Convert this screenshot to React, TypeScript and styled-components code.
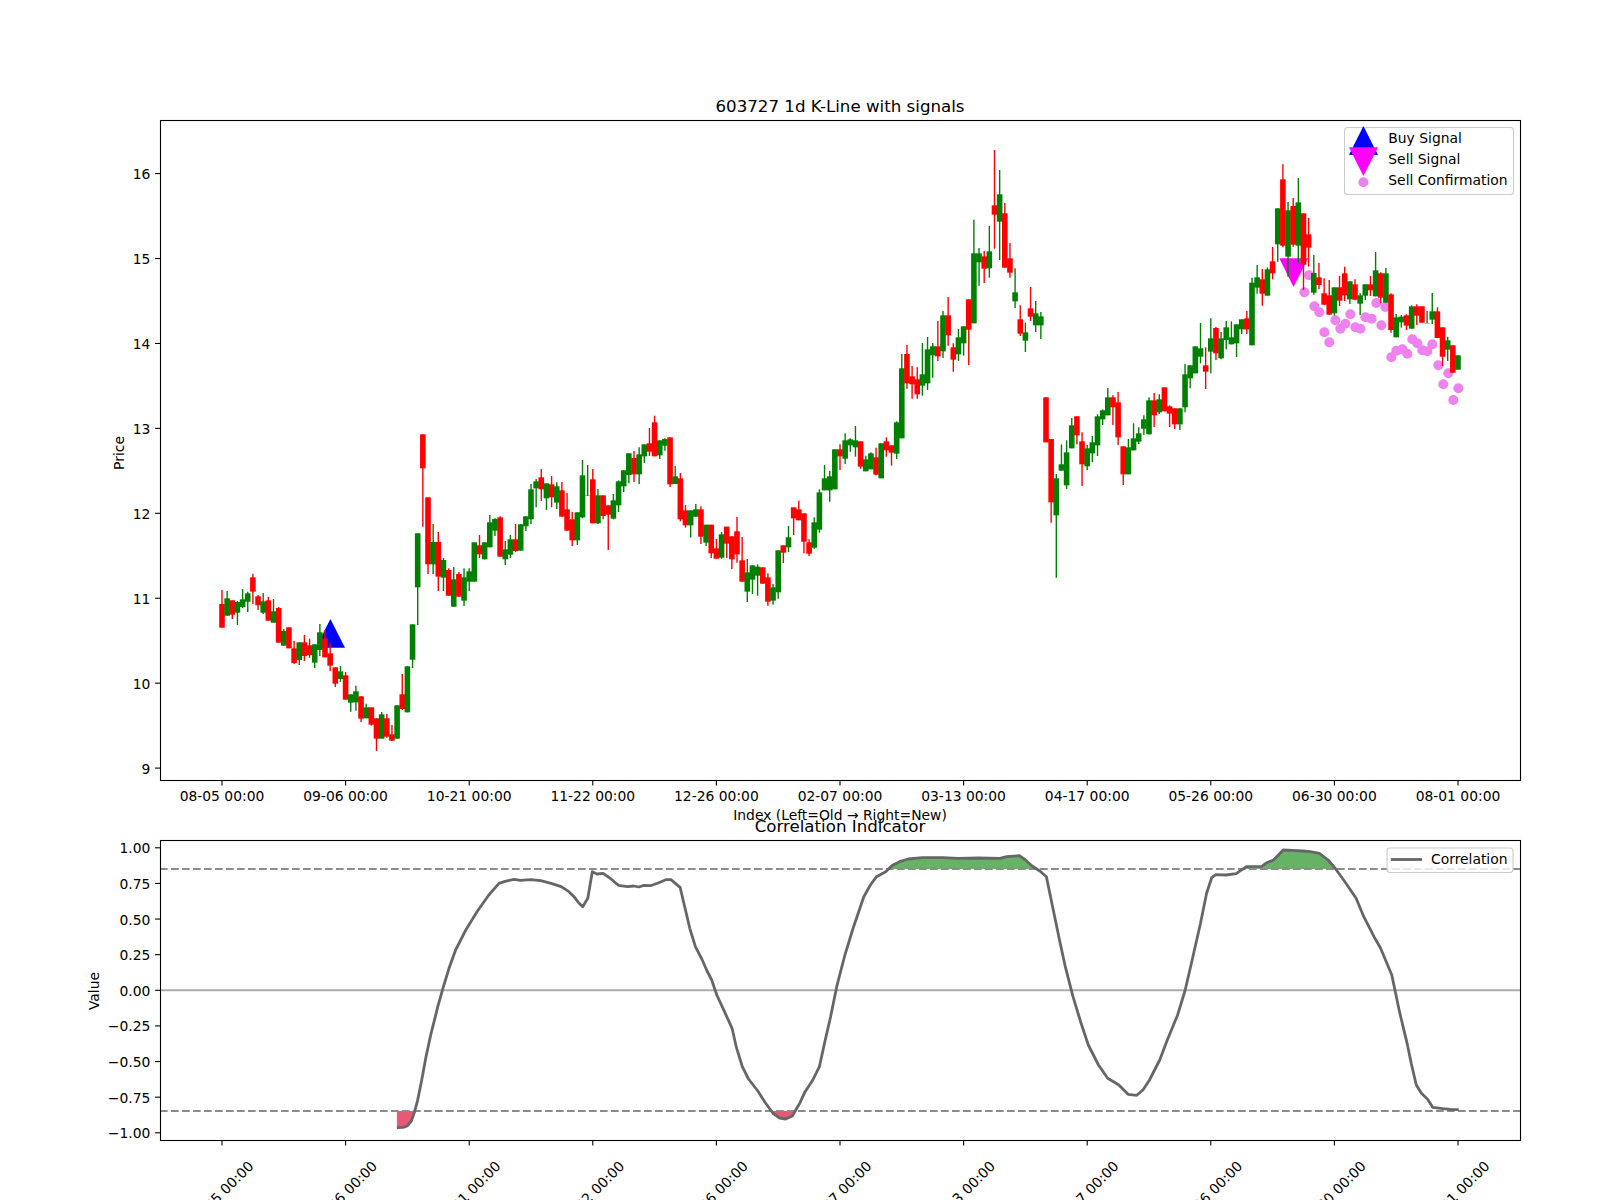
import React from 'react';
import styled, { createGlobalStyle } from 'styled-components';

const FONT = `"DejaVu Sans", "Liberation Sans", sans-serif`;

const GlobalStyle = createGlobalStyle`
  html, body { margin: 0; padding: 0; background: #fff; }
`;

const Figure = styled.main`
  width: 1600px;
  height: 1200px;
  box-sizing: border-box;
  padding: 97px 80px 0 160px;
  display: flex;
  flex-direction: column;
  gap: 37px;
  overflow: hidden;
  background: #fff;
  font-family: ${FONT};
  color: #000;
`;

const Panel = styled.section`
  display: flex;
  flex-direction: column;
  gap: 3px;
`;

const PanelTitle = styled.h2`
  margin: 0;
  height: 20px;
  font-size: 16.67px;
  line-height: 20px;
  font-weight: 400;
  text-align: center;
  white-space: nowrap;
`;

const Axes = styled.div<{ $height: number }>`
  height: ${p => p.$height}px;
`;

const Plot = styled.svg`
  display: block;
  width: 100%;
  height: 100%;
  overflow: visible;
`;

const Spines = styled.rect`
  fill: none;
  stroke: #000;
  stroke-width: 1.1;
`;

const Tick = styled.line`
  stroke: #000;
  stroke-width: 1.1;
`;

const TickText = styled.text<{ $anchor?: string }>`
  font-family: ${FONT};
  font-size: 13.89px;
  fill: #000;
  text-anchor: ${p => p.$anchor || 'middle'};
`;

const Wick = styled.line<{ $up: boolean }>`
  stroke: ${p => (p.$up ? '#008000' : '#ff0000')};
  stroke-width: 1.4;
`;

const Body = styled.rect<{ $up: boolean }>`
  fill: ${p => (p.$up ? '#008000' : '#ff0000')};
`;

const Marker = styled.polygon<{ $color: string }>`
  fill: ${p => p.$color};
`;

const Dot = styled.circle`
  fill: #ee82ee;
`;

const LegendBox = styled.rect`
  fill: #fff;
  fill-opacity: 0.8;
  stroke: #ccc;
  stroke-width: 1.1;
`;

const GuideLine = styled.line<{ $dashed?: boolean }>`
  stroke: ${p => (p.$dashed ? '#8c8c8c' : '#adadad')};
  stroke-width: 2.1;
  stroke-dasharray: ${p => (p.$dashed ? '7.7 3.3' : 'none')};
`;

const CorrLine = styled.path`
  fill: none;
  stroke: #666;
  stroke-width: 2.8;
  stroke-linejoin: round;
`;

const CorrFill = styled.path<{ $color: string; $alpha: number }>`
  fill: ${p => p.$color};
  fill-opacity: ${p => p.$alpha};
  stroke: none;
`;

const LegendLine = styled.line`
  stroke: #666;
  stroke-width: 2.8;
`;

// candles as read off the 3x crops: colour, body top, body bottom, wick top, wick bottom
const CANDLE_ROWS: [number, string][] = [
  [480, `r 372 443 330 443,g 355 407 333 407,r 361 404 361 417,g 366 398 363 435,g 358 381 327 384,g 340 365 335 396,r 292 335 281 372,r 349 376 345 390,g 364 398 339 402,r 361 422 351 422,
g 394 428 357 428,r 384 488 381 488,g 453 497 447 497,r 442 505 442 505,r 505 549 482 552,g 487 540 487 555,r 487 528 465 543,r 496 525 476 533,g 493 548 493 564,g 457 510 432 528,
r 475 532 450 532,r 520 557 490 573,r 562 611 562 621,g 574 597 558 606,r 586 659 576 659,g 643 668 643 695,g 634 667 617 692,r 649 716 649 726,g 682 715 671 715,r 682 734 682 737,
r 715 776 715 813,g 703 776 696 776,r 715 770 702 773,r 763 782 735 782,g 676 776 676 776,r 643 687 582 690,g 559 697 559 697,g 433 539 433 564`],
  [420, `g 340 502 340 615,r 43 145 43 320,r 232 433 232 462,g 366 433 312 462,r 366 470 336 513,g 420 473 414 513,r 450 527 445 527,g 478 560 441 560,r 462 530 456 530,g 472 542 445 558,
g 454 485 445 513,g 367 485 367 485,r 376 403 345 414,g 367 418 367 418,g 307 382 285 382,g 297 332 295 348,r 292 410 289 410,g 388 418 363 435,g 358 404 345 414,r 358 393 312 396,
g 313 392 313 392,g 289 319 289 333,g 208 298 192 312,g 184 205 177 262,r 172 208 147 243,g 190 235 190 270,r 193 232 168 262,g 199 248 187 267,r 211 290 186 290,r 268 332 219 332,
r 298 361 276 378,g 277 361 277 375,g 166 292 120 295,g 227 228 135 228,r 178 310 147 310,g 226 310 207 312,r 226 288 226 298,r 256 284 256 390,g 241 296 222 298,g 184 256 181 276,
g 151 199 151 216,g 100 165 100 190,r 114 163 93 186,g 103 163 82 192,g 73 109 73 129,r 70 95 24 108,r 7 109 -13 109`],
  [410, `g 91 136 91 147,g 87 107 85 122,r 82 223 82 231,g 199 222 168 222,r 205 328 189 334,r 301 346 285 353,g 301 346 301 383,g 298 320 282 320,r 298 380 289 402,g 344 398 344 408,
r 344 430 344 444,r 415 446 387 446,g 373 443 366 446,r 350 401 350 444,r 379 448 379 477,r 364 433 321 458,r 451 515 381 515,g 487 545 447 576,g 466 509 466 552,g 470 497 463 557,
r 472 521 472 521,r 502 575 490 587,g 532 572 522 584,g 421 547 421 566,r 406 428 406 459,g 382 412 348 426,r 292 325 292 375,r 298 331 272 331,r 310 395 310 430,r 397 431 388 438,
g 337 413 322 416,g 247 359 238 368,g 205 241 165 241,g 199 241 183 275,g 118 238 118 238,r 118 139 103 180,g 91 146 70 162,g 88 106 85 125,g 91 112 48 140,r 94 170 94 176,
g 148 184 137 184,g 130 178 127 178,r 142 194 113 196,g 100 205 100 205,r 94 121 82 140,r 106 128 106 167`],
  [280, `g 427 521 424 537,g 265 475 222 475`],
  [130, `r 672 760 645 776,r 739 763 708 806,r 748 793 712 806,g 733 767 639 797,g 658 760 621 780,g 649 676 639 743,r 649 679 573 693,g 556 664 543 684,r 556 616 501 647,r 652 689 640 725,
g 622 673 597 693,g 589 640 589 677,r 508 599 508 705,g 370 580 269 580,g 370 397 354 467,r 379 416 363 459,g 364 415 288 443,r 226 254 60 356,g 193 275 120 390,r 250 413 219 413,
r 385 428 339 443,g 487 514 415 534,r 568 611 526 618,g 607 632 578 666,r 535 560 471 573,g 550 586 513 606,g 559 586 546 627`],
  [290, `r 322 457 322 457,r 447 637 447 698,g 565 676 552 863,g 523 542 463 542,g 487 586 451 597,g 406 475 384 475,r 379 436 379 463,r 454 523 427 588,g 475 529 465 540,g 457 490 438 516,
g 379 466 373 498,g 361 388 358 405,g 322 376 294 376,r 322 352 316 405,r 337 442 306 465,r 469 553 469 585,g 472 553 447 553,g 445 481 400 481,g 430 455 412 462,g 388 416 376 435,
g 331 433 322 433,r 331 376 309 411,g 328 367 313 372,r 292 364 292 364,r 349 371 346 411,r 355 403 355 417,g 355 403 355 420,g 253 352 222 367,g 226 265 226 295,g 169 250 169 250,
g 175 200 99 220,r 226 245 172 297,g 145 185 85 250,r 114 190 111 210,g 145 205 126 208,g 112 150 93 178,g 142 163 94 163,g 103 160 103 201`],
  [150, `g 508 538 508 552,r 505 538 483 552,g 398 586 383 586,g 382 413 345 431,r 388 431 357 467,g 358 437 352 437,r 334 370 291 388,g 175 283 175 335,r 88 287 43 292,g 181 320 156 380,
r 168 284 144 290,g 157 287 84 340,r 190 344 190 420,r 253 293 204 350,g 369 428 315 434,r 382 405 339 418,r 430 464 385 465,r 436 494 390 494,g 412 490 412 497,r 412 452 378 468,
r 370 436 350 453,g 394 448 394 462,r 403 449 388 451,g 436 461 430 495,g 403 437 403 450,r 403 421 378 438,g 361 439 306 439,r 370 443 367 460,g 370 458 354 458,r 433 540 430 548,
g 502 562 492 562,g 500 517 495 533,r 496 527 493 540,g 469 536 466 536,r 469 497 463 525,r 469 518 469 518,g 519 520 483 520,g 484 509 429 522,r 484 564 472 564,r 532 620 532 648,
g 571 599 560 633,r 586 668 586 668,g 616 659 616 659`],
];

type Candle = { up: boolean; top: number; bottom: number; high: number; low: number };

const candles: Candle[] = CANDLE_ROWS.flatMap(([y0, row]) =>
  row.split(',').map(item => {
    const [kind, ...rest] = item.trim().split(' ');
    const [top, bottom, high, low] = rest.map(v => y0 + Number(v) / 3);
    return { up: kind === 'g', top, bottom, high, low };
  }),
);

const xAt = (i: number) => 222 + 5.15 * i;
const TICK_INDEX = Array.from({ length: 11 }, (_, n) => n * 24);

const DATES = ['08-05', '09-06', '10-21', '11-22', '12-26', '02-07', '03-13', '04-17', '05-26', '06-30', '08-01'];

const SELL_DOTS = [
  [207, 376], [193, 427], [223, 469], [238, 487], [253, 547], [268, 577], [286, 511], [301, 536],
  [316, 521], [331, 493], [346, 532], [361, 536], [376, 502], [395, 506], [409, 459], [424, 526],
  [436, 471], [454, 622], [469, 602], [487, 598], [502, 611], [517, 568], [532, 580], [547, 601],
  [562, 604], [577, 583], [595, 646], [610, 703], [625, 670], [640, 750], [655, 715],
].map(([x, y]) => [1240 + x / 3, 150 + y / 3]);

const PRICE_TICKS = [9, 10, 11, 12, 13, 14, 15, 16];
const priceY = (p: number) => 768.1 - 84.93 * (p - 9);

const VALUE_TICKS = [1, 0.75, 0.5, 0.25, 0, -0.25, -0.5, -0.75, -1];
const valueY = (v: number) => 990.3 - 142.5 * v;

// correlation curve, left and right half read from two crops
const LEFT = [
  [778, 1043], [790, 1042], [798, 1038], [806, 1024], [812, 998], [818, 965], [826, 905], [835, 830], [845, 760], [858, 680],
  [868, 625], [880, 565], [893, 510], [913, 450], [935, 395], [958, 345], [978, 310], [990, 304], [1008, 298], [1020, 301],
  [1040, 299], [1060, 302], [1080, 310], [1100, 320], [1115, 335], [1125, 350], [1135, 370], [1142, 380], [1152, 355], [1161, 275],
  [1170, 282], [1182, 280], [1196, 295], [1212, 316], [1230, 320], [1242, 318], [1252, 321], [1262, 316], [1275, 317], [1290, 309],
  [1305, 299], [1315, 299], [1333, 322], [1342, 380], [1352, 445], [1363, 500], [1375, 535], [1385, 570], [1395, 600], [1405, 645],
  [1420, 695], [1435, 745], [1443, 800], [1455, 860], [1467, 897], [1484, 930], [1500, 968], [1515, 1000], [1528, 1014], [1540, 1017],
  [1553, 1008],
];
const RIGHT = [
  [0, 968], [10, 935], [25, 900], [38, 860], [48, 790], [60, 710], [72, 620], [88, 525], [105, 440], [125, 350],
  [138, 315], [150, 290], [168, 275], [180, 257], [195, 245], [212, 237], [240, 233], [280, 233], [310, 235], [350, 234],
  [392, 235], [405, 230], [430, 227], [442, 240], [455, 258], [470, 273], [483, 290], [495, 380], [510, 490], [520, 560],
  [535, 650], [550, 725], [565, 795], [585, 855], [603, 895], [625, 915], [643, 943], [660, 946], [672, 930], [685, 900],
  [705, 840], [720, 780], [740, 705], [755, 630], [770, 530], [785, 430], [797, 340], [807, 293], [815, 284], [835, 285],
  [855, 281], [875, 260], [905, 259], [915, 248], [928, 240], [947, 210], [965, 211], [985, 213], [1000, 215], [1018, 220],
  [1035, 240], [1050, 267], [1070, 310], [1090, 355], [1105, 410], [1125, 470], [1138, 505], [1160, 585], [1175, 695], [1190, 790],
  [1198, 850], [1208, 915], [1218, 940], [1230, 958], [1240, 982], [1260, 986], [1275, 988], [1291, 989],
];
const curve = [
  ...LEFT.map(([x, y]) => [x / 1.96, 780 + y / 3]),
  ...RIGHT.map(([x, y]) => [800 + x / 1.96, 780 + y / 3]),
];
const curvePath = curve.map(([x, y], i) => `${i ? 'L' : 'M'}${x.toFixed(1)} ${y.toFixed(1)}`).join(' ');
const firstX = curve[0][0].toFixed(1);
const lastX = curve[curve.length - 1][0].toFixed(1);

const PriceChart: React.FC = () => (
  <Plot viewBox="160 120 1360 660">
    <Marker $color="#0000ff" points="316,647.7 345,647.7 330.4,619" />
    <Marker $color="#ff00ff" points="1279.3,258.3 1308,258.3 1293.5,287" />
    {SELL_DOTS.map(([x, y]) => <Dot key={`${x}-${y}`} cx={x} cy={y} r={5} />)}

    {candles.map((c, i) => (
      <g key={i}>
        <Wick $up={c.up} x1={xAt(i)} x2={xAt(i)} y1={c.high} y2={c.low} />
        <Body $up={c.up} x={xAt(i) - 2.8} width={5.6} y={c.top} height={c.bottom - c.top} />
      </g>
    ))}

    <Spines x={160.5} y={120.5} width={1360} height={660} />
    {TICK_INDEX.map((n, i) => (
      <g key={n}>
        <Tick x1={xAt(n)} x2={xAt(n)} y1={780} y2={785.4} />
        <TickText x={xAt(n)} y={800.5}>{DATES[i]} 00:00</TickText>
      </g>
    ))}
    {PRICE_TICKS.map(p => (
      <g key={p}>
        <Tick x1={155.1} x2={160} y1={priceY(p)} y2={priceY(p)} />
        <TickText $anchor="end" x={150.3} y={priceY(p) + 5.5}>{p}</TickText>
      </g>
    ))}
    <TickText x={840} y={820}>Index (Left=Old → Right=New)</TickText>
    <TickText transform="translate(124 453) rotate(-90)">Price</TickText>

    <LegendBox x={1344.5} y={127.5} width={169} height={67} rx={3} />
    <Marker $color="#0000ff" points="1349,155 1378,155 1363.4,126" />
    <Marker $color="#ff00ff" points="1349,147.3 1378,147.3 1363.4,176" />
    <Dot cx={1363.4} cy={182.3} r={5} />
    <TickText $anchor="start" x={1388.3} y={143}>Buy Signal</TickText>
    <TickText $anchor="start" x={1388.3} y={164}>Sell Signal</TickText>
    <TickText $anchor="start" x={1388.3} y={184.5}>Sell Confirmation</TickText>
  </Plot>
);

const CorrelationChart: React.FC = () => (
  <Plot viewBox="160 840 1360 300">
    <defs>
      <clipPath id="above-band"><rect x={160} y={840} width={1360} height={29} /></clipPath>
      <clipPath id="below-band"><rect x={160} y={1111} width={1360} height={29} /></clipPath>
    </defs>
    <CorrFill $color="#008000" $alpha={0.6} clipPath="url(#above-band)" d={`${curvePath} L${lastX} 1140 L${firstX} 1140 Z`} />
    <CorrFill $color="#dc143c" $alpha={0.7} clipPath="url(#below-band)" d={`${curvePath} L${lastX} 840 L${firstX} 840 Z`} />

    <GuideLine x1={160} x2={1520} y1={990.2} y2={990.2} />
    <GuideLine $dashed x1={160} x2={1520} y1={869} y2={869} />
    <GuideLine $dashed x1={160} x2={1520} y1={1111} y2={1111} />
    <CorrLine d={curvePath} />

    <Spines x={160.5} y={840.5} width={1360} height={300} />
    {TICK_INDEX.map((n, i) => (
      <g key={n}>
        <Tick x1={xAt(n)} x2={xAt(n)} y1={1140} y2={1145.4} />
        <TickText $anchor="end" transform={`translate(${xAt(n) + 32.4} 1167) rotate(-45)`}>{DATES[i]} 00:00</TickText>
      </g>
    ))}
    {VALUE_TICKS.map(v => (
      <g key={v}>
        <Tick x1={155.1} x2={160} y1={valueY(v)} y2={valueY(v)} />
        <TickText $anchor="end" x={150.3} y={valueY(v) + 5.5}>{v.toFixed(2).replace('-', '−')}</TickText>
      </g>
    ))}
    <TickText transform="translate(99 991) rotate(-90)">Value</TickText>

    <LegendBox x={1387} y={848} width={126} height={24.5} rx={3} />
    <LegendLine x1={1390.8} x2={1422} y1={859.5} y2={859.5} />
    <TickText $anchor="start" x={1431} y={863.5}>Correlation</TickText>
  </Plot>
);

const App: React.FC = () => (
  <>
    <GlobalStyle />
    <Figure>
      <Panel>
        <PanelTitle>603727 1d K-Line with signals</PanelTitle>
        <Axes $height={660}><PriceChart /></Axes>
      </Panel>
      <Panel>
        <PanelTitle>Correlation Indicator</PanelTitle>
        <Axes $height={300}><CorrelationChart /></Axes>
      </Panel>
    </Figure>
  </>
);

export default App;
